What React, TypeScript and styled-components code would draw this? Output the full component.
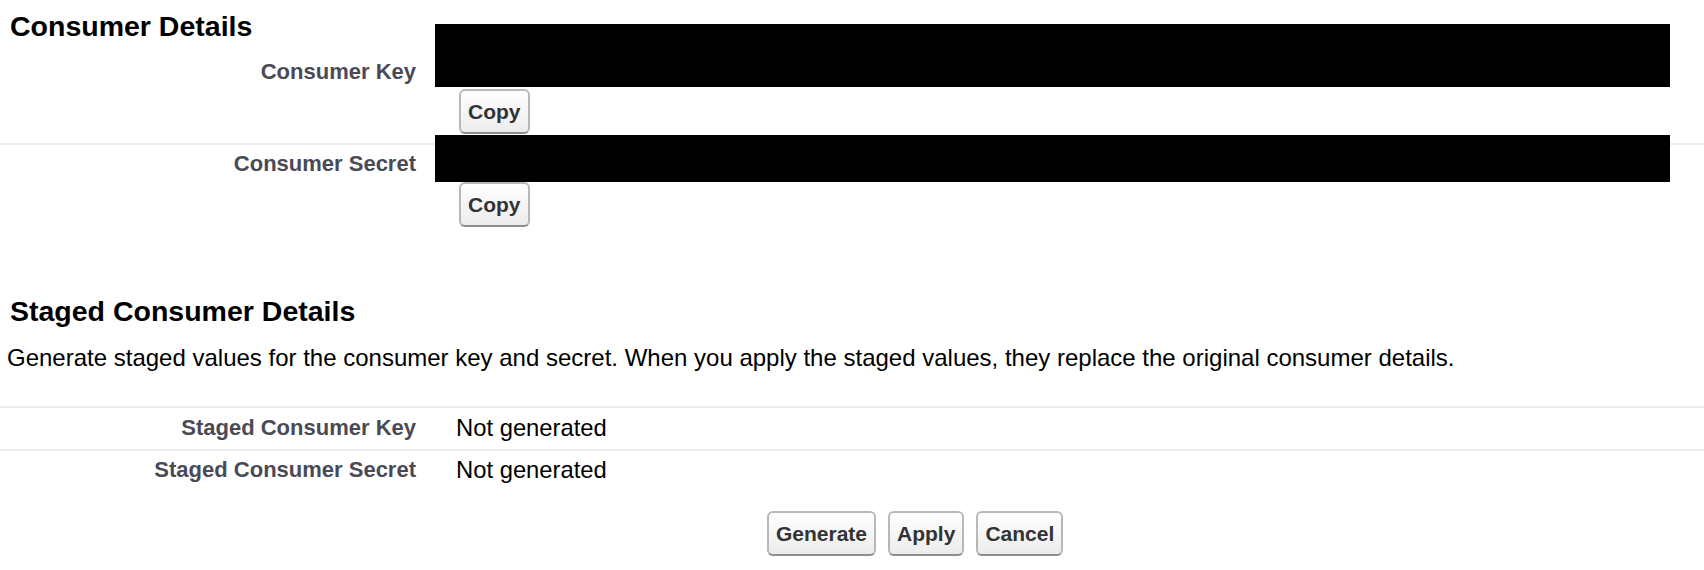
import styled, { createGlobalStyle } from "styled-components";

const GlobalStyle = createGlobalStyle`
  html, body {
    margin: 0;
    padding: 0;
    background: #fff;
  }
  body {
    font-family: "Liberation Sans", Arial, Helvetica, sans-serif;
    color: #000;
  }
`;

const Page = styled.div`
  width: 1704px;
  padding-top: 10px;
`;

const SectionTitle = styled.h2<{ $gap?: number }>`
  margin: ${(p) => p.$gap ?? 0}px 0 0 0;
  padding-left: 10px;
  font-size: 28.5px;
  line-height: 32px;
  font-weight: 700;
  color: #000;
`;

const Description = styled.p`
  margin: 17px 0 0 0;
  padding-left: 7px;
  font-size: 24px;
  line-height: 28px;
`;

const DetailTable = styled.div<{ $top?: number }>`
  margin-top: ${(p) => p.$top ?? 0}px;
  border-top: ${(p) => (p.$top ? "2px solid #ededed" : "none")};
`;

const Row = styled.div<{ $divider?: boolean; $pad?: number }>`
  display: grid;
  grid-template-columns: 426px 1fr;
  padding-bottom: ${(p) => p.$pad ?? 0}px;
  border-bottom: ${(p) => (p.$divider ? "2px solid #ededed" : "none")};
`;

const Label = styled.div<{ $top: number }>`
  padding: ${(p) => p.$top}px 10px 0 0;
  text-align: right;
  font-size: 22px;
  line-height: 26px;
  font-weight: 700;
  color: #4a4a56;
`;

const DataCell = styled.div`
  display: flex;
  flex-direction: column;
  align-items: flex-start;
  padding-left: 9px;
`;

const Masked = styled.div<{ $height: number; $lift: number }>`
  width: 1235px;
  height: ${(p) => p.$height}px;
  margin-top: -${(p) => p.$lift}px;
  background: #000;
`;

const Value = styled.div<{ $top: number }>`
  padding-top: ${(p) => p.$top}px;
  margin-left: 21px;
  font-size: 23.8px;
  line-height: 28px;
`;

const Button = styled.button<{ $offset?: number }>`
  box-sizing: border-box;
  height: 45px;
  margin: ${(p) => p.$offset ?? 0}px 0 0 0;
  padding: 0 7px;
  font-family: "Liberation Sans", Arial, Helvetica, sans-serif;
  font-size: 21px;
  font-weight: 700;
  color: #333;
  background: linear-gradient(#ffffff, #ececec);
  border: 2px solid #b8b8b8;
  border-bottom-color: #8e8e8e;
  border-radius: 6px;
`;

const CopyButton = styled(Button)`
  margin-left: 24px;
`;

const ButtonBar = styled.div`
  display: flex;
  gap: 12px;
  margin-top: 19px;
  padding-left: 767px;
`;

export default function App() {
  return (
    <Page>
      <GlobalStyle />
      <SectionTitle>Consumer Details</SectionTitle>
      <DetailTable>
        <Row $divider $pad={9}>
          <Label $top={17}>Consumer Key</Label>
          <DataCell>
            <Masked $height={63} $lift={18} />
            <CopyButton $offset={2}>Copy</CopyButton>
          </DataCell>
        </Row>
        <Row $pad={1}>
          <Label $top={6}>Consumer Secret</Label>
          <DataCell>
            <Masked $height={47} $lift={10} />
            <CopyButton $offset={0}>Copy</CopyButton>
          </DataCell>
        </Row>
      </DetailTable>

      <SectionTitle $gap={67}>Staged Consumer Details</SectionTitle>
      <Description>
        Generate staged values for the consumer key and secret. When you apply
        the staged values, they replace the original consumer details.
      </Description>
      <DetailTable $top={34}>
        <Row $divider $pad={7}>
          <Label $top={7}>Staged Consumer Key</Label>
          <DataCell>
            <Value $top={6}>Not generated</Value>
          </DataCell>
        </Row>
        <Row $pad={8}>
          <Label $top={6}>Staged Consumer Secret</Label>
          <DataCell>
            <Value $top={5}>Not generated</Value>
          </DataCell>
        </Row>
      </DetailTable>
      <ButtonBar>
        <Button>Generate</Button>
        <Button>Apply</Button>
        <Button>Cancel</Button>
      </ButtonBar>
    </Page>
  );
}
